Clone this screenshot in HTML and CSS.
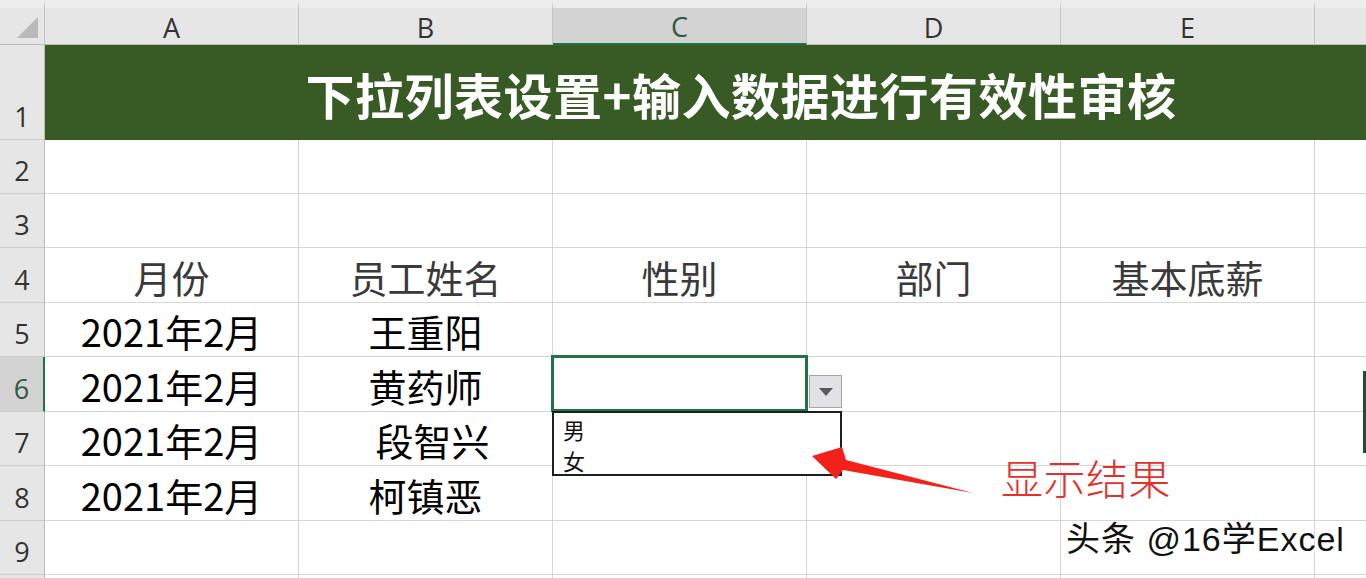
FILE: index.html
```html
<!DOCTYPE html>
<html lang="zh-CN">
<head>
<meta charset="utf-8">
<title>下拉列表设置</title>
<link rel="stylesheet" href="styles.css">
</head>
<body>
<div class="sheet">
  <div class="grid">
    <div class="corner"><span class="corner-tri"></span></div>
    <div class="colhead">A</div>
    <div class="colhead">B</div>
    <div class="colhead active">C</div>
    <div class="colhead">D</div>
    <div class="colhead">E</div>
    <div class="colhead last"></div>

    <div class="rowhead">1</div>
    <div class="title">下拉列表设置+输入数据进行有效性审核</div>

    <div class="rowhead">2</div>
    <div class="cell"></div><div class="cell"></div><div class="cell"></div><div class="cell"></div><div class="cell"></div><div class="cell last"></div>

    <div class="rowhead">3</div>
    <div class="cell"></div><div class="cell"></div><div class="cell"></div><div class="cell"></div><div class="cell"></div><div class="cell last"></div>

    <div class="rowhead">4</div>
    <div class="cell hdr">月份</div><div class="cell hdr">员工姓名</div><div class="cell hdr">性别</div><div class="cell hdr">部门</div><div class="cell hdr">基本底薪</div><div class="cell last"></div>

    <div class="rowhead">5</div>
    <div class="cell data">2021年2月</div><div class="cell data">王重阳</div><div class="cell"></div><div class="cell"></div><div class="cell"></div><div class="cell last"></div>

    <div class="rowhead active">6</div>
    <div class="cell data">2021年2月</div><div class="cell data">黄药师</div>
    <div class="cell selected">
      <div class="dd-button"><span class="dd-tri"></span></div>
      <div class="dd-list">
        <div class="dd-item">男</div>
        <div class="dd-item">女</div>
      </div>
    </div>
    <div class="cell"></div><div class="cell"></div><div class="cell last"><span class="edge-bar"></span></div>

    <div class="rowhead">7</div>
    <div class="cell data">2021年2月</div><div class="cell data shift">段智兴</div><div class="cell"></div><div class="cell"></div><div class="cell"></div><div class="cell last"></div>

    <div class="rowhead">8</div>
    <div class="cell data">2021年2月</div><div class="cell data">柯镇恶</div><div class="cell"></div><div class="cell"></div><div class="cell"></div><div class="cell last"></div>

    <div class="rowhead">9</div>
    <div class="cell"></div><div class="cell"></div><div class="cell"></div><div class="cell"></div><div class="cell"></div><div class="cell last"></div>

    <div class="rowhead"></div>
    <div class="cell"></div><div class="cell"></div><div class="cell"></div><div class="cell"></div><div class="cell"></div><div class="cell last"></div>
  </div>

  <svg class="arrow" width="1366" height="578" viewBox="0 0 1366 578">
    <polygon points="812,456 842,447 846,460 973,493 843,470 836,479" fill="#f2221b"/>
  </svg>
  <div class="note">显示结果</div>
  <div class="watermark">头条 @16学Excel</div>
</div>
</body>
</html>
```

FILE: styles.css
```css
* { box-sizing: border-box; }
html, body {
  margin: 0;
  padding: 0;
  background: #ffffff;
  overflow: hidden;
}
.sheet {
  position: relative;
  width: 1366px;
  height: 578px;
  overflow: hidden;
  font-family: "Noto Sans CJK SC", "Noto Sans", sans-serif;
}
.grid {
  display: grid;
  grid-template-columns: 45px repeat(5, 254px) 1fr;
  grid-template-rows: 45px 95px 54px 54px 55px 54px 55px 54px 55px 54px 20px;
  width: 1366px;
}
.corner {
  position: relative;
  background: #e6e6e6;
  border-top: 8px solid #ededed;
  border-right: 1px solid #c2c2c2;
  border-bottom: 1px solid #bdbdbd;
}
.corner-tri {
  position: absolute;
  right: 6px;
  bottom: 6px;
  width: 0;
  height: 0;
  border-left: 21px solid transparent;
  border-bottom: 21px solid #b9b9b9;
}
.colhead {
  background: #e6e6e6;
  border-top: 8px solid #ededed;
  border-right: 1px solid #c4c4c4;
  border-bottom: 1px solid #bdbdbd;
  display: flex;
  align-items: center;
  justify-content: center;
  font-family: "Open Sans", "Noto Sans", sans-serif;
  font-size: 27px;
  color: #333333;
  padding-top: 2px;
}
.colhead.active {
  background: #d3d3d3;
  border-bottom: 2px solid #217346;
  color: #2e5a44;
}
.colhead.last { border-right: none; }
.rowhead {
  background: #e6e6e6;
  border-right: 1px solid #bdbdbd;
  border-bottom: 1px solid #cdcdcd;
  display: flex;
  align-items: flex-end;
  justify-content: center;
  font-family: "Open Sans", "Noto Sans", sans-serif;
  font-size: 27px;
  line-height: 44px;
  color: #333333;
}
.rowhead.active {
  background: #d3d3d3;
  border-right: 2px solid #217346;
  color: #2e5a44;
}
.title {
  grid-column: 2 / -1;
  background: #385a25;
  color: #ffffff;
  font-weight: 700;
  font-size: 49px;
  display: flex;
  align-items: center;
  justify-content: center;
  padding-left: 71px;
  padding-top: 2px;
  white-space: nowrap;
  letter-spacing: 0.5px;
}
.cell {
  position: relative;
  border-right: 1px solid #d6d6d6;
  border-bottom: 1px solid #d6d6d6;
  display: flex;
  align-items: flex-end;
  justify-content: center;
  font-size: 38px;
  line-height: 50px;
  white-space: nowrap;
}
.cell.last { border-right: none; }
.cell.hdr {
  color: #3a3a3a;
  font-weight: 400;
}
.cell.data {
  color: #000000;
  font-weight: 400;
}
.cell.shift { padding-left: 14px; }
.cell.selected::after {
  content: "";
  position: absolute;
  left: -2px;
  top: -2px;
  right: -2px;
  bottom: -1px;
  border: 3px solid #217346;
  pointer-events: none;
}
.dd-button {
  position: absolute;
  left: 256px;
  top: 18px;
  width: 33px;
  height: 33px;
  background: #e2e2e6;
  border: 1px solid #a6a6a6;
  display: flex;
  align-items: center;
  justify-content: center;
  z-index: 3;
}
.dd-tri {
  width: 0;
  height: 0;
  border-left: 7px solid transparent;
  border-right: 7px solid transparent;
  border-top: 8px solid #5a5a5a;
}
.dd-list {
  position: absolute;
  left: -1px;
  top: 54px;
  width: 290px;
  height: 65px;
  background: #ffffff;
  border: 2px solid #1e1e1e;
  z-index: 4;
  display: flex;
  flex-direction: column;
  padding: 0 0 0 9px;
}
.dd-item {
  font-size: 22px;
  line-height: 32px;
  height: 31px;
  color: #111111;
}
.edge-bar {
  position: absolute;
  right: 0;
  top: 14px;
  width: 3px;
  height: 82px;
  background: #1e4d3b;
}
.arrow {
  position: absolute;
  left: 0;
  top: 0;
  z-index: 5;
  pointer-events: none;
}
.note {
  position: absolute;
  left: 1001px;
  top: 452px;
  font-size: 42px;
  line-height: 50px;
  font-weight: 300;
  color: #e5302a;
  letter-spacing: 0.5px;
  z-index: 5;
}
.watermark {
  position: absolute;
  left: 1066px;
  top: 518px;
  font-family: "Liberation Sans", "Noto Sans CJK SC", sans-serif;
  font-size: 34px;
  line-height: 42px;
  color: #111111;
  text-shadow: 2px 2px 0 #ffffff, -1px -1px 0 #ffffff;
  letter-spacing: 1px;
  white-space: nowrap;
  z-index: 6;
}
```
